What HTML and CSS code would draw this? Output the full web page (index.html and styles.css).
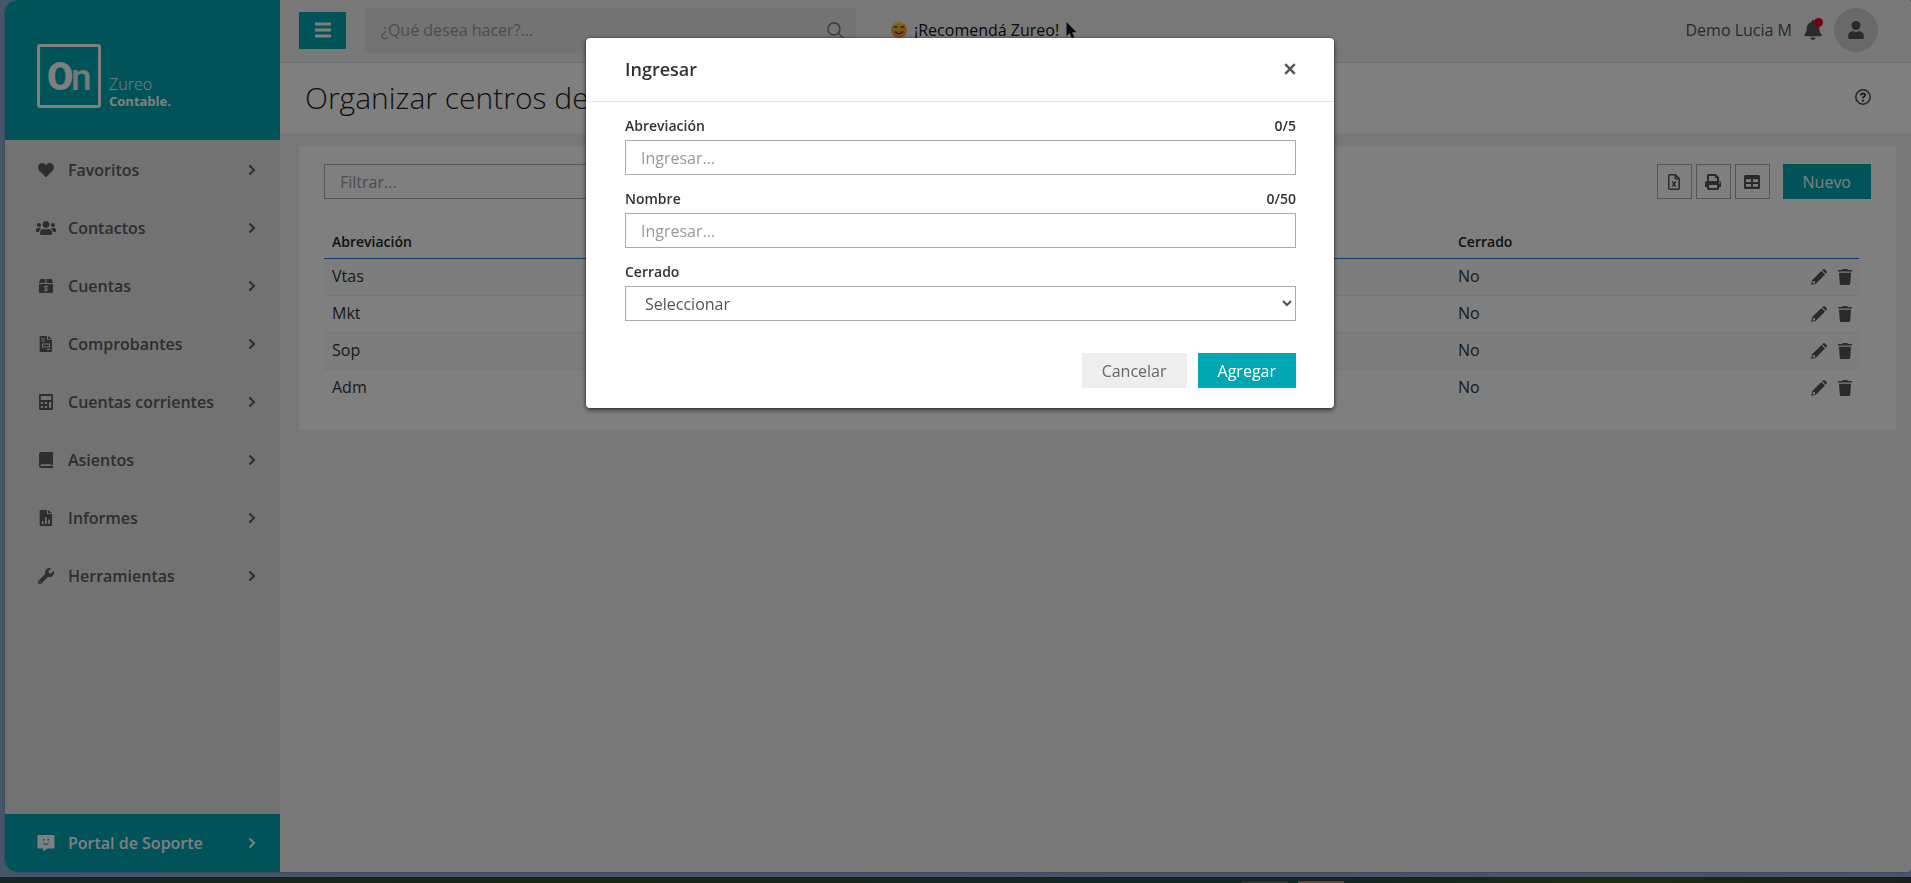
FILE: index.html
```html
<!DOCTYPE html>
<html lang="es">
<head>
	<meta charset="UTF-8">
	<title>Zureo Contable</title>
	<link rel="stylesheet" href="styles.css">
</head>
<body>

<!-- iconos -->
<svg class="sprite" aria-hidden="true">
	<symbol id="i-heart" viewBox="0 0 512 512"><path d="M462.3 62.6C407.5 15.9 326 24.3 275.7 76.2L256 96.5l-19.7-20.3C186.1 24.3 104.5 15.9 49.7 62.6c-62.8 53.6-66.1 149.8-9.9 207.9l193.5 199.8c12.5 12.9 32.8 12.9 45.3 0l193.5-199.8c56.3-58.1 53-154.3-9.8-207.9z"/></symbol>
	<symbol id="i-users" viewBox="0 0 640 512"><path d="M96 224c35.3 0 64-28.7 64-64s-28.7-64-64-64-64 28.7-64 64 28.7 64 64 64zm448 0c35.3 0 64-28.7 64-64s-28.7-64-64-64-64 28.7-64 64 28.7 64 64 64zm32 32h-64c-17.6 0-33.5 7.1-45.1 18.6 40.3 22.1 68.9 62 75.1 109.4h66c17.7 0 32-14.3 32-32v-32c0-35.3-28.7-64-64-64zm-256 0c61.9 0 112-50.1 112-112S381.9 32 320 32 208 82.1 208 144s50.1 112 112 112zm76.8 32h-8.3c-20.8 10-43.9 16-68.5 16s-47.6-6-68.5-16h-8.3C179.6 288 128 339.6 128 403.2V432c0 26.5 21.5 48 48 48h288c26.5 0 48-21.5 48-48v-28.8c0-63.6-51.6-115.2-115.2-115.2zm-223.7-13.4C161.5 263.1 145.6 256 128 256H64c-35.3 0-64 28.7-64 64v32c0 17.7 14.3 32 32 32h65.9c6.3-47.4 34.9-87.3 75.2-109.4z"/></symbol>
	<symbol id="i-box" viewBox="0 0 16 16"><path d="M3.200 1h4.200v4H1l1-3.200Q2.300 1 3.200 1zM8.600 1h4.200q.9 0 1.200.8L15 5H8.600zM1 6h14v8q0 1-1 1H2q-1 0-1-1z"/><path class="cut" d="M10 8.500H7.400q-1 0-1 .9t1 1l1.200.2q1 .2 1 1t-1 1H6M8 7.500v6.200"/></symbol>
	<symbol id="i-file" viewBox="0 0 16 16"><path fill-rule="evenodd" d="M2.500 0H9v4h5v11.200q0 .8-.8.8H2.500q-.8 0-.8-.8V.8q0-.8.8-.8zM10 0l4 3.200H10zM3.500 2.200v1H7v-1zM3.500 4.600v1H7v-1zM4 7.500v4h8v-4zM5 8.500h6v2H5zM9 13v1h3.500v-1z"/></symbol>
	<symbol id="i-calc" viewBox="0 0 16 16"><path fill-rule="evenodd" d="M2 0h12q1 0 1 1v14q0 1-1 1H2q-1 0-1-1V1q0-1 1-1zM2.800 2v4h10.400V2zM2.800 8v2h2V8zM6.700 8v2h2.400V8zM11 8v6h2.200V8zM2.800 12v2h2v-2zM6.700 12v2h2.400v-2z"/></symbol>
	<symbol id="i-book" viewBox="0 0 16 16"><path fill-rule="evenodd" d="M3.500 0H14q1 0 1 1v10.500q0 .7-.5.8v2.200q.5.200.5.700t-.7.8H3.500Q1 16 1 13.500v-11Q1 0 3.500 0zM3.500 12.300q-.9 0-.9.900t.9.900h9.800v-1.800z"/></symbol>
	<symbol id="i-report" viewBox="0 0 16 16"><path fill-rule="evenodd" d="M2.500 0H9v4h5v11.200q0 .8-.8.8H2.500q-.8 0-.8-.8V.8q0-.8.8-.8zM10 0l4 3.200H10zM4 11v3h1.600v-3zM7 7v7h1.700V7zM10.200 9.500V14h1.700V9.500z"/></symbol>
	<symbol id="i-wrench" viewBox="0 0 512 512"><path d="M507.730 109.100c-2.240-9.030-13.540-12.090-20.120-5.510l-74.360 74.360-67.880-11.310-11.310-67.880 74.360-74.360c6.620-6.620 3.430-17.900-5.660-20.160-47.380-11.740-99.550.91-136.580 37.930-39.640 39.640-50.550 97.100-34.050 147.200L18.740 402.760c-24.990 24.990-24.990 65.510 0 90.500 24.990 24.990 65.510 24.990 90.500 0l213.210-213.210c50.120 16.710 107.470 5.680 147.370-34.220 37.070-37.070 49.700-89.320 37.910-136.730zM64 472c-13.250 0-24-10.750-24-24 0-13.260 10.750-24 24-24s24 10.740 24 24c0 13.250-10.750 24-24 24z"/></symbol>
	<symbol id="i-chat" viewBox="0 0 17 16"><path fill-rule="evenodd" d="M1 0h15q1 0 1 1v11.500q0 1-1 1h-5.500L5.500 16v-2.500H1q-1 0-1-1V1Q0 0 1 0zM5.500 4v1.500H7V4zM10 4v1.500h1.500V4zM5 7.500q3.500 5 7 0h-1q-2.500 2.800-5 0z"/></symbol>
	<symbol id="i-chevron" viewBox="0 0 8 12"><path class="line" d="M1.500 1.500 6 6l-4.500 4.500"/></symbol>
	<symbol id="i-bars" viewBox="0 0 16 15"><path d="M.5 0h15q.5 0 .5.500v2q0 .5-.5.500H.5Q0 3 0 2.500v-2Q0 0 .5 0zM.5 6h15q.5 0 .5.500v2q0 .5-.5.500H.5Q0 9 0 8.500v-2Q0 6 .5 6zM.5 12h15q.5 0 .5.500v2q0 .5-.5.500H.5q-.5 0-.5-.5v-2q0-.5.5-.5z"/></symbol>
	<symbol id="i-search" viewBox="0 0 16 16"><circle class="thin" cx="6.500" cy="6.500" r="5.700"/><path class="thin" d="m10.600 10.600 4.900 4.900"/></symbol>
	<symbol id="i-bell" viewBox="0 0 448 512"><path d="M224 512c35.320 0 63.970-28.650 63.970-64H160.030c0 35.350 28.650 64 63.970 64zm215.390-149.710c-19.320-20.760-55.470-51.990-55.470-154.290 0-77.700-54.480-139.900-127.940-155.160V32c0-17.670-14.320-32-31.980-32s-31.980 14.330-31.980 32v20.840C118.560 68.100 64.080 130.300 64.080 208c0 102.300-36.150 133.530-55.470 154.290-6 6.450-8.660 14.160-8.610 21.710.11 16.400 12.980 32 32.100 32h383.800c19.120 0 32-15.600 32.100-32 .05-7.550-2.610-15.270-8.610-21.710z"/></symbol>
	<symbol id="i-user" viewBox="0 0 448 512"><path d="M224 256c70.700 0 128-57.300 128-128S294.700 0 224 0 96 57.300 96 128s57.300 128 128 128zm89.600 32h-16.700c-22.200 10.200-46.900 16-72.900 16s-50.600-5.800-72.900-16h-16.700C60.200 288 0 348.200 0 422.400V464c0 26.500 21.500 48 48 48h352c26.500 0 48-21.500 48-48v-41.600c0-74.200-60.200-134.400-134.400-134.400z"/></symbol>
	<symbol id="i-help" viewBox="0 0 16 16"><circle class="mid" cx="8" cy="8" r="7.200"/><path class="line" d="M5.800 6.300Q6 4.400 8 4.400t2.100 1.700Q10.100 7.200 9 7.700q-1 .5-1 1.500"/><circle cx="8" cy="11.600" r="1.200"/></symbol>
	<symbol id="i-excel" viewBox="0 0 12 16"><path class="mid" d="M2 .8h5.500l3.700 3.700V14q0 1.200-1.200 1.200H2Q.8 15.200.8 14V2Q.8.8 2 .8zM7.300 1v3.700H11"/><path class="mid" d="m4.200 7.300 3.600 5.400m0-5.400-3.600 5.400"/></symbol>
	<symbol id="i-print" viewBox="0 0 16 16"><path fill-rule="evenodd" d="M2 7V1.500Q2 0 3.500 0h7.300L14 3.200V7q2 0 2 2v4h-2v1.500q0 1.500-1.500 1.500h-9Q2 16 2 14.500V13H0V9q0-2 2-2zM4 2v5h8V4h-2V2zM4 11v3h8v-3zM13.500 8.200v1.300h1.300V8.200z"/></symbol>
	<symbol id="i-table" viewBox="0 0 16 14"><path fill-rule="evenodd" d="M1.500 0h13Q16 0 16 1.500v11q0 1.500-1.500 1.500h-13Q0 14 0 12.500v-11Q0 0 1.500 0zM2 4.200v2.800h5V4.200zM9 4.200v2.800h5V4.200zM2 9v2.800h5V9zM9 9v2.800h5V9z"/></symbol>
	<symbol id="i-pencil" viewBox="0 0 16 16"><path fill-rule="evenodd" d="M11.200 1.200 12 .5q1-.9 2 0l1.500 1.500q.9 1 0 2l-.7.800zM10.400 2l3.600 3.600L4.900 14.700 0 16l1.300-4.900zM2.200 11.900l-.8 2.800 2.800-.8-.2-1.600z"/></symbol>
	<symbol id="i-trash" viewBox="0 0 14 16"><path d="M.5 1H4l.8-1h4.400l.8 1h3.500q.5 0 .5.500v1H0v-1Q0 1 .5 1zM1 3.700h12l-.8 11q-.1 1.300-1.400 1.300H3.200q-1.300 0-1.400-1.300z"/></symbol>
	<symbol id="i-close" viewBox="0 0 10 10"><path class="line" d="m1 1 8 8M9 1 1 9"/></symbol>
</svg>

<div class="app">
	<aside class="sidebar">
		<div class="logo">
			<svg class="logo-mark" viewBox="0 0 64 64">
				<rect x="1.500" y="1.500" width="61" height="61" rx="1.500"/>
				<text x="10" y="46"><tspan class="logo-o">O</tspan><tspan class="logo-n" x="34">n</tspan></text>
			</svg>
			<div class="logo-name">
				<span class="logo-zureo">Zureo</span>
				<b class="logo-product">Contable.</b>
			</div>
		</div>
		<nav class="menu">
			<a class="menu-item" href="#"><svg><use href="#i-heart"/></svg><span>Favoritos</span><svg class="chevron"><use href="#i-chevron"/></svg></a>
			<a class="menu-item" href="#"><svg><use href="#i-users"/></svg><span>Contactos</span><svg class="chevron"><use href="#i-chevron"/></svg></a>
			<a class="menu-item" href="#"><svg><use href="#i-box"/></svg><span>Cuentas</span><svg class="chevron"><use href="#i-chevron"/></svg></a>
			<a class="menu-item" href="#"><svg><use href="#i-file"/></svg><span>Comprobantes</span><svg class="chevron"><use href="#i-chevron"/></svg></a>
			<a class="menu-item" href="#"><svg><use href="#i-calc"/></svg><span>Cuentas corrientes</span><svg class="chevron"><use href="#i-chevron"/></svg></a>
			<a class="menu-item" href="#"><svg><use href="#i-book"/></svg><span>Asientos</span><svg class="chevron"><use href="#i-chevron"/></svg></a>
			<a class="menu-item" href="#"><svg><use href="#i-report"/></svg><span>Informes</span><svg class="chevron"><use href="#i-chevron"/></svg></a>
			<a class="menu-item" href="#"><svg><use href="#i-wrench"/></svg><span>Herramientas</span><svg class="chevron"><use href="#i-chevron"/></svg></a>
		</nav>
		<a class="menu-item support" href="#"><svg><use href="#i-chat"/></svg><span>Portal de Soporte</span><svg class="chevron"><use href="#i-chevron"/></svg></a>
	</aside>

	<div class="main">
		<header class="topbar">
			<button class="btn-menu" aria-label="Menú"><svg><use href="#i-bars"/></svg></button>
			<div class="search">
				<input type="text" placeholder="¿Qué desea hacer?..." aria-label="¿Qué desea hacer?">
				<svg><use href="#i-search"/></svg>
			</div>
			<a class="recommend" href="#">
				<svg class="smiley" viewBox="0 0 16 16">
					<defs><linearGradient id="face" x1="0" y1="0" x2="0" y2="1"><stop offset="0" stop-color="#ffd23c"/><stop offset="1" stop-color="#f0813c"/></linearGradient></defs>
					<circle cx="8" cy="8" r="8" fill="url(#face)"/>
					<path d="M2.800 6q1.500-2.400 3.400-.4M9.800 5.600q1.900-2 3.400.4M4 9.500q4 4.500 8 0"/>
				</svg>
				<span>¡Recomendá Zureo!</span>
				<svg class="cursor" viewBox="0 0 10 16"><path d="M0 0v14l3.200-3 2 5 2.400-1-2-4.800H10z"/></svg>
			</a>
			<div class="account">
				<span>Demo Lucia M</span>
				<button class="bell" aria-label="Notificaciones"><svg><use href="#i-bell"/></svg><i class="dot"></i></button>
				<button class="avatar" aria-label="Usuario"><svg><use href="#i-user"/></svg></button>
			</div>
		</header>

		<div class="titlebar">
			<h1>Organizar centros de</h1>
			<button class="help" aria-label="Ayuda"><svg><use href="#i-help"/></svg></button>
		</div>

		<section class="card">
			<div class="tools">
				<input class="field filter" type="text" placeholder="Filtrar..." aria-label="Filtrar">
				<div class="tools-right">
					<button class="btn-icon" aria-label="Excel"><svg class="narrow"><use href="#i-excel"/></svg></button>
					<button class="btn-icon" aria-label="Imprimir"><svg><use href="#i-print"/></svg></button>
					<button class="btn-icon" aria-label="Columnas"><svg><use href="#i-table"/></svg></button>
					<button class="btn btn-primary btn-new">Nuevo</button>
				</div>
			</div>
			<div class="grid-wrap">
				<table class="grid">
					<thead>
						<tr><th class="col-abbr">Abreviación</th><th class="col-closed">Cerrado</th><th></th></tr>
					</thead>
					<tbody>
						<tr>
							<td>Vtas</td><td>No</td>
							<td class="actions"><button aria-label="Editar"><svg><use href="#i-pencil"/></svg></button><button aria-label="Eliminar"><svg><use href="#i-trash"/></svg></button></td>
						</tr>
						<tr>
							<td>Mkt</td><td>No</td>
							<td class="actions"><button aria-label="Editar"><svg><use href="#i-pencil"/></svg></button><button aria-label="Eliminar"><svg><use href="#i-trash"/></svg></button></td>
						</tr>
						<tr>
							<td>Sop</td><td>No</td>
							<td class="actions"><button aria-label="Editar"><svg><use href="#i-pencil"/></svg></button><button aria-label="Eliminar"><svg><use href="#i-trash"/></svg></button></td>
						</tr>
						<tr>
							<td>Adm</td><td>No</td>
							<td class="actions"><button aria-label="Editar"><svg><use href="#i-pencil"/></svg></button><button aria-label="Eliminar"><svg><use href="#i-trash"/></svg></button></td>
						</tr>
					</tbody>
				</table>
			</div>
		</section>
	</div>
</div>
<div class="taskbar"><i class="task"></i><i class="task task-red"></i></div>

<!-- modal -->
<div class="backdrop">
	<form class="modal" role="dialog" aria-labelledby="modal-title">
		<div class="modal-header">
			<h2 id="modal-title">Ingresar</h2>
			<button class="close" type="button" aria-label="Cerrar"><svg><use href="#i-close"/></svg></button>
		</div>
		<div class="modal-body">
			<div class="group">
				<div class="group-head"><label for="abbr">Abreviación</label><span>0/5</span></div>
				<input class="field" id="abbr" type="text" maxlength="5" placeholder="Ingresar...">
			</div>
			<div class="group">
				<div class="group-head"><label for="name">Nombre</label><span>0/50</span></div>
				<input class="field" id="name" type="text" maxlength="50" placeholder="Ingresar...">
			</div>
			<div class="group">
				<div class="group-head"><label for="closed">Cerrado</label></div>
				<select class="field" id="closed"><option>Seleccionar</option></select>
			</div>
		</div>
		<div class="modal-footer">
			<button class="btn btn-default" type="button">Cancelar</button>
			<button class="btn btn-primary" type="button">Agregar</button>
		</div>
	</form>
</div>

</body>
</html>
```
FILE: styles.css
```css
* {
	box-sizing: border-box;
}
body {
	margin: 0;
	height: 100vh;
	display: flex;
	flex-direction: column;
	background: #8eabd2;
	color: #333;
	font: 16px/24px "Open Sans", "Noto Sans", sans-serif;
	overflow: hidden;
}
button {
	padding: 0;
	border: 0;
	background: none;
	color: inherit;
	font: inherit;
	cursor: pointer;
}
a {
	color: inherit;
	text-decoration: none;
}
svg {
	display: block;
	width: 16px;
	height: 16px;
	fill: currentColor;
}
.sprite {
	position: absolute;
	width: 0;
	height: 0;
}
.line, .mid, .thin, .cut {
	fill: none;
	stroke: currentColor;
	stroke-width: 2;
}
.mid {
	stroke-width: 1.5;
}
.thin {
	stroke-width: 1.4;
}
.cut {
	stroke: #e4e4e4;
	stroke-width: 1;
}

.app {
	flex: 1;
	display: flex;
	margin: 0 0 5px 5px;
	border-radius: 12px 2px 4px 12px;
	background: #f0f0f0;
	box-shadow: 0 0 2px rgba(0,0,0,.4);
	overflow: hidden;
}

/* sidebar */
.sidebar {
	width: 275px;
	flex: none;
	display: flex;
	flex-direction: column;
	background: #e4e4e4;
}
.logo {
	height: 140px;
	padding: 44px 32px 0;
	display: flex;
	align-items: flex-start;
	gap: 8px;
	background: #00a7b3;
	color: #fff;
}
.logo-mark {
	width: 64px;
	height: 64px;
}
.logo-mark rect {
	fill: none;
	stroke: #fff;
	stroke-width: 3;
}
.logo-o {
	font: 900 38px Roboto, sans-serif;
}
.logo-n {
	font: 500 37px Roboto, sans-serif;
	fill: #e4f4f5;
}
.logo-name {
	padding-top: 31px;
	display: flex;
	flex-direction: column;
}
.logo-zureo {
	font-size: 16px;
	line-height: 18px;
	font-weight: 300;
}
.logo-product {
	font-size: 13px;
	line-height: 16px;
}
.menu {
	flex: 1;
	padding-top: 1px;
}
.menu-item {
	height: 58px;
	padding: 0 24px 0 31px;
	display: flex;
	align-items: center;
	color: #5c5c5c;
	font-weight: 600;
}
.menu-item svg {
	width: 20px;
	flex: none;
}
.menu-item .chevron {
	width: 8px;
	height: 12px;
}
.menu-item span {
	flex: 1;
	padding-left: 12px;
}
.support {
	background: #00a7b3;
	color: #fff;
}

/* barra superior */
.main {
	flex: 1;
	min-width: 0;
}
.topbar {
	height: 63px;
	padding: 0 33px 2px 19px;
	display: flex;
	align-items: center;
	border-bottom: 1px solid #e4e4e4;
}
.btn-menu {
	width: 47px;
	height: 37px;
	display: flex;
	align-items: center;
	justify-content: center;
	background: #00a7b3;
	color: #fff;
}
.search {
	width: 491px;
	height: 45px;
	margin-left: 19px;
	padding: 0 12px 0 16px;
	display: flex;
	align-items: center;
	background: #e6e6e6;
	color: #777;
}
.search input {
	flex: 1;
	border: 0;
	padding: 0;
	background: none;
	font: inherit;
}
.search svg {
	width: 17px;
	height: 17px;
}
::placeholder {
	color: #999;
	opacity: 1;
}
.recommend {
	margin-left: 35px;
	display: flex;
	align-items: center;
	gap: 7px;
	color: #111;
}
.smiley path {
	fill: none;
	stroke: #5a3200;
	stroke-width: 1.2;
}
.cursor {
	width: 11px;
}
.account {
	margin-left: auto;
	display: flex;
	align-items: center;
	gap: 12px;
	color: #555;
}
.bell {
	position: relative;
}
.bell svg {
	width: 18px;
	height: 20px;
}
.dot {
	position: absolute;
	top: -2px;
	right: -1px;
	width: 9px;
	height: 9px;
	border-radius: 50%;
	background: #e6002e;
}
.avatar {
	width: 44px;
	height: 44px;
	display: flex;
	align-items: center;
	justify-content: center;
	border-radius: 50%;
	background: #d2d2d2;
}
.avatar svg {
	height: 18px;
}
.titlebar {
	height: 70px;
	padding: 0 40px 0 25px;
	display: flex;
	align-items: center;
	justify-content: space-between;
	background: #fff;
}
h1 {
	margin: 0;
	font-size: 30px;
	line-height: 40px;
	font-weight: 300;
	color: #222;
}
.help {
	padding-bottom: 3px;
	color: #444;
}

/* listado */
.card {
	margin: 13px 15px 0 19px;
	padding: 18px 25px 24px;
	background: #fff;
}
.tools {
	display: flex;
	justify-content: space-between;
}
.tools-right {
	display: flex;
	gap: 4px;
}
.field {
	width: 100%;
	height: 35px;
	padding: 0 15px;
	border: 1px solid #aaa;
	border-radius: 0;
	background: #fff;
	color: #555;
	font: inherit;
}
.filter {
	width: 400px;
}
.btn-icon {
	width: 35px;
	height: 35px;
	display: flex;
	align-items: center;
	justify-content: center;
	border: 1px solid #aaa;
	color: #555;
}
.narrow {
	width: 12px;
}
.btn {
	height: 35px;
	padding: 0 20px;
}
.btn-primary {
	background: #00a7b3;
	color: #fff;
}
.btn-default {
	background: #eee;
	color: #666;
}
.btn-new {
	margin-left: 9px;
}
.grid-wrap {
	margin-top: 26px;
	padding-right: 12px;
}
.grid {
	width: 100%;
	border-collapse: collapse;
	table-layout: fixed;
}
.grid th {
	height: 33px;
	padding: 1px 8px 0;
	border-bottom: 1px solid #1a73e0;
	color: #222;
	font-size: 14px;
	font-weight: 600;
	text-align: left;
}
.grid td {
	height: 37px;
	padding: 0 8px 2px;
	border-bottom: 1px solid #eee;
}
.grid tr:last-child td {
	border-bottom: 0;
}
.grid tbody tr:nth-child(odd) {
	background: #fafafa;
}
.col-abbr {
	width: 1126px;
}
.grid .actions {
	padding: 0 6px 2px;
	text-align: right;
	color: #555;
}
.actions button {
	margin-left: 10px;
	vertical-align: middle;
}

.taskbar {
	height: 6px;
	display: flex;
	gap: 10px;
	align-items: flex-end;
	padding-left: 65%;
	background: linear-gradient(90deg, #2a4c4c, #324828 30%, #284a4a 55%, #244848 70%, #3c5828 84%, #383c3c);
}
.task {
	width: 46px;
	height: 2px;
	background: #566;
}
.task-red {
	background: #e07080;
}

/* modal */
.backdrop {
	position: fixed;
	inset: 0;
	padding: 38px 0 0 9px;
	display: flex;
	align-items: flex-start;
	justify-content: center;
	background: rgba(0,0,0,.5);
}
.modal {
	width: 748px;
	border-radius: 4px;
	background: #fff;
	box-shadow: 0 2px 5px rgba(0,0,0,.6), 0 0 2px rgba(0,0,0,.5);
}
.modal-header {
	height: 64px;
	padding: 0 38px 2px 39px;
	display: flex;
	align-items: center;
	justify-content: space-between;
	border-bottom: 1px solid #e5e5e5;
}
h2 {
	margin: 0;
	font-size: 18px;
	line-height: 24px;
	font-weight: 600;
}
.close {
	color: #555;
}
.close svg {
	width: 12px;
	height: 12px;
}
.modal-body {
	padding: 12px 38px 0 39px;
}
.group {
	margin-bottom: 12px;
}
.group-head {
	height: 26px;
	display: flex;
	justify-content: space-between;
	line-height: 24px;
	font-size: 14px;
	font-weight: 600;
}
.modal-footer {
	padding: 20px 38px 20px;
	display: flex;
	justify-content: flex-end;
	gap: 11px;
}
```
